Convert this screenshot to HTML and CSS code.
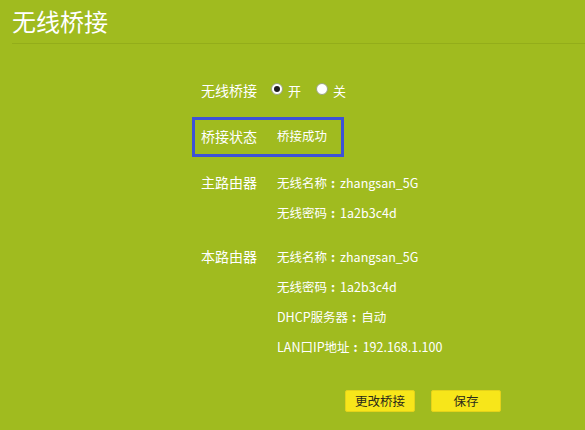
FILE: index.html
```html
<!DOCTYPE html>
<html lang="zh-CN">
<head>
<meta charset="utf-8">
<link rel="stylesheet" href="styles.css">
</head>
<body>
<div class="page">
  <header class="head"><h1 class="title">无线桥接</h1></header>
  <main class="main">
    <div class="row first">
      <span class="label">无线桥接</span>
      <span class="radios">
        <span class="radio on"></span><span class="opt opt-on">开</span>
        <span class="radio"></span><span class="opt">关</span>
      </span>
    </div>
    <div class="status">
      <span class="label">桥接状态</span>
      <span class="value">桥接成功</span>
    </div>
    <div class="group g1">
      <div class="row"><span class="label">主路由器</span><span class="value">无线名称<span class="colon">:</span>zhangsan_5G</span></div>
      <div class="row"><span class="label"></span><span class="value">无线密码<span class="colon">:</span>1a2b3c4d</span></div>
    </div>
    <div class="group g2">
      <div class="row"><span class="label">本路由器</span><span class="value">无线名称<span class="colon">:</span>zhangsan_5G</span></div>
      <div class="row"><span class="label"></span><span class="value">无线密码<span class="colon">:</span>1a2b3c4d</span></div>
      <div class="row"><span class="label"></span><span class="value">DHCP服务器<span class="colon">:</span>自动</span></div>
      <div class="row"><span class="label"></span><span class="value">LAN口IP地址<span class="colon">:</span>192.168.1.100</span></div>
    </div>
    <div class="actions">
      <button class="btn">更改桥接</button>
      <button class="btn">保存</button>
    </div>
  </main>
</div>
</body>
</html>
```
FILE: styles.css
```css
html, body {
  margin: 0;
  padding: 0;
  background: #a0bb1f;
}
.page {
  width: 585px;
  height: 430px;
  font-family: "Noto Sans CJK SC", "Noto Sans", sans-serif;
  color: #ffffff;
  font-size: 14px;
}
.head {
  height: 43px;
  margin-left: 12px;
  border-bottom: 1px solid #93ad1a;
  display: flex;
  align-items: center;
}
.title {
  margin: 0;
  font-size: 24px;
  font-weight: normal;
  line-height: 1;
  margin-top: -2px;
}
.main {
  padding-left: 192px;
}
.row {
  height: 30px;
  display: flex;
  align-items: center;
  padding-left: 9px;
}
.row.first {
  margin-top: 31px;
}
.label {
  width: 76px;
  flex: none;
}
.value {
  white-space: nowrap;
  font-size: 12.5px;
}
.colon {
  display: inline-block;
  margin: 0 5px 0 4px;
  font-weight: bold;
}
.radios {
  display: flex;
  align-items: center;
  margin-left: -6px;
  font-size: 13px;
}
.radio {
  width: 12px;
  height: 12px;
  border-radius: 50%;
  background: #ffffff;
  border: 1px solid #9aa382;
  box-sizing: border-box;
  display: inline-flex;
  align-items: center;
  justify-content: center;
  margin-top: -2px;
}
.radio.on::after {
  content: "";
  width: 6px;
  height: 6px;
  border-radius: 50%;
  background: #1e1e1e;
}
.opt {
  margin-left: 5px;
}
.opt-on {
  margin-right: 15px;
}
.status {
  margin-top: 12px;
  width: 152px;
  height: 40px;
  box-sizing: border-box;
  border: 3px solid #3d52d6;
  display: flex;
  align-items: center;
  padding-left: 6px;
  padding-bottom: 3px;
}
.g1 {
  margin-top: 10px;
}
.g2 {
  margin-top: 14px;
}
.actions {
  margin-top: 29px;
  padding-left: 153px;
  display: flex;
  gap: 16px;
}
.btn {
  width: 70px;
  height: 22px;
  background: #f7e61a;
  border: 1px solid #e4d21a;
  border-radius: 2px;
  color: #2a2a1a;
  font-family: "Noto Sans CJK SC", sans-serif;
  font-size: 12.5px;
  padding: 0;
  line-height: 20px;
}
```
